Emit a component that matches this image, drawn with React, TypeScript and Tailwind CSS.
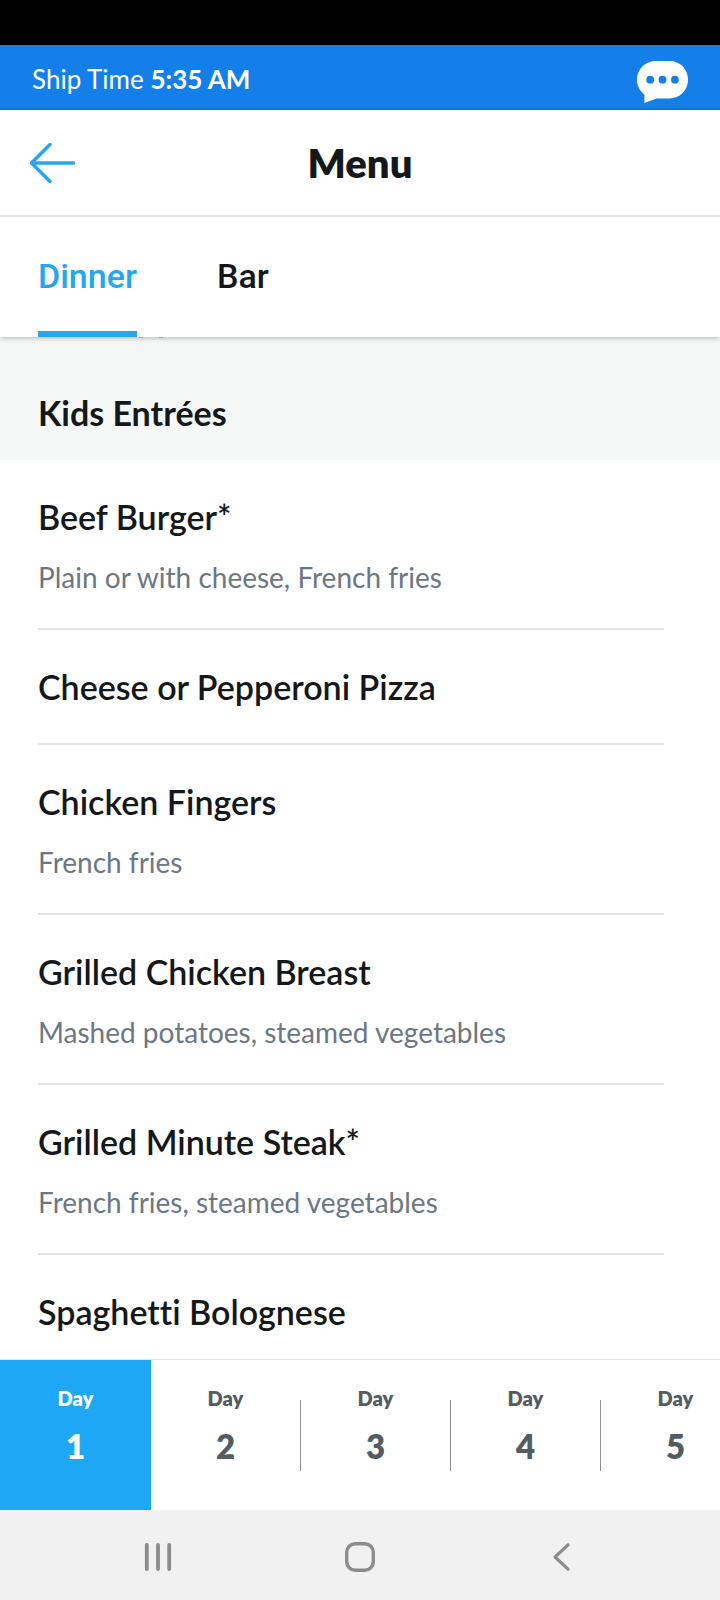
import { useState } from "react";

const tabs = ["Dinner", "Bar"];

const entrees = [
  { name: "Beef Burger*", description: "Plain or with cheese, French fries" },
  { name: "Cheese or Pepperoni Pizza" },
  { name: "Chicken Fingers", description: "French fries" },
  { name: "Grilled Chicken Breast", description: "Mashed potatoes, steamed vegetables" },
  { name: "Grilled Minute Steak*", description: "French fries, steamed vegetables" },
  { name: "Spaghetti Bolognese" },
];

const days = [1, 2, 3, 4, 5];

const ShipTimeBar = () => (
  <div className="flex h-[65px] shrink-0 items-end justify-between bg-[#147fe8] px-8 pb-[7px] text-white shadow-[inset_0_-3px_2px_-2px_rgba(0,0,0,0.2)]">
    <p className="pb-2 text-[26px] leading-8">
      Ship Time <span className="font-bold">5:35 AM</span>
    </p>
    <button type="button" aria-label="Messages">
      <svg className="block h-[42px] w-[51px]" viewBox="0 0 51 42" fill="none">
        <path
          d="M19 0H32.5C43 0 51 8 51 18.7S43 37.4 32.5 37.4H19.5L7.4 42V33.5C2.8 30 0 24.8 0 18.7C0 8 8.5 0 19 0Z"
          fill="#fff"
        />
        <circle cx="13.2" cy="18.7" r="3.9" fill="#147fe8" />
        <circle cx="25.5" cy="18.7" r="3.9" fill="#147fe8" />
        <circle cx="37.9" cy="18.7" r="3.9" fill="#147fe8" />
      </svg>
    </button>
  </div>
);

const Header = () => (
  <header className="grid h-[107px] shrink-0 grid-cols-[1fr_auto_1fr] items-center border-b-2 border-[#e4e4e4] px-[30px]">
    <button type="button" aria-label="Back" className="justify-self-start">
      <svg className="block h-10 w-[45px]" viewBox="0 0 45 40" fill="none">
        <path
          d="M20 1.5L1.5 20L20 38.5M2 20H43.5"
          stroke="#26a6ee"
          strokeWidth="3.5"
          strokeLinecap="round"
          strokeLinejoin="round"
        />
      </svg>
    </button>
    <h1 className="text-[40px] font-extrabold leading-[48px]">Menu</h1>
  </header>
);

const SystemNav = () => (
  <nav aria-label="System" className="flex h-[90px] shrink-0 justify-center bg-[#f1f1f1] pt-1 text-[#8c8c8c]">
    <button type="button" aria-label="Recent apps" className="flex w-[28%] items-center justify-center">
      <svg className="h-8 w-8" viewBox="0 0 32 32" fill="none" stroke="currentColor" strokeWidth="3.8" strokeLinecap="round">
        <path d="M4.8 4v24M16 4v24M27.2 4v24" />
      </svg>
    </button>
    <button type="button" aria-label="Home" className="flex w-[28%] items-center justify-center">
      <svg className="h-8 w-8" viewBox="0 0 32 32" fill="none" stroke="currentColor" strokeWidth="3.4">
        <rect x="2.7" y="2.7" width="26.6" height="26.6" rx="8.5" />
      </svg>
    </button>
    <button type="button" aria-label="Back" className="flex w-[28%] items-center justify-center">
      <svg className="h-8 w-8" viewBox="0 0 32 32" fill="none" stroke="currentColor" strokeWidth="3.2" strokeLinecap="round" strokeLinejoin="round">
        <path d="M22 3.8L9 16L22 28.2" />
      </svg>
    </button>
  </nav>
);

export default function App() {
  const [activeTab, setActiveTab] = useState("Dinner");
  const [activeDay, setActiveDay] = useState(1);

  return (
    <div className="flex h-screen flex-col overflow-hidden bg-white font-['Lato',sans-serif] text-[#15181a] [font-variant-ligatures:none]">
      <div className="h-[45px] shrink-0 bg-black" />
      <ShipTimeBar />
      <Header />

      <nav
        aria-label="Menus"
        className="relative z-10 flex h-[120px] shrink-0 gap-20 bg-white px-[38px] shadow-[0_3px_4px_-1px_rgba(0,0,0,0.2)]"
      >
        {tabs.map((tab) => (
          <button
            key={tab}
            type="button"
            onClick={() => setActiveTab(tab)}
            className={`border-b-6 pt-1 font-['Roboto',sans-serif] text-[34px] font-medium leading-10 ${
              tab === activeTab ? "border-[#26a6ee] text-[#26a6ee]" : "border-transparent"
            }`}
          >
            {tab}
          </button>
        ))}
        {/* descenders of the row scrolled under the tabs */}
        <span aria-hidden="true" className="absolute left-[139px] top-full flex h-px gap-4">
          <span className="w-1 bg-[#a3a6a7]" />
          <span className="w-1 bg-[#a3a6a7]" />
        </span>
      </nav>

      <main className="min-h-0 flex-1 overflow-y-auto [scrollbar-width:none]">
        <h2 className="bg-[#f5f7f7] px-[38px] pb-[27px] pt-14 text-[34px] font-bold leading-10">
          Kids Entrées
        </h2>
        <ul className="pl-[38px] pr-14">
          {entrees.map((entree) => (
            <li key={entree.name} className="border-b-2 border-[#e4e4e4] pb-9 pt-[37px]">
              <h3 className="text-[34px] font-semibold leading-10">{entree.name}</h3>
              {entree.description && (
                <p className="mt-[25px] text-[28px] leading-[30px] text-[#6c7783]">{entree.description}</p>
              )}
            </li>
          ))}
        </ul>
      </main>

      <div className="flex h-[151px] shrink-0 overflow-x-auto border-t border-[#e4e4e4] [scrollbar-width:none]">
        {days.map((day) => (
          <button
            key={day}
            type="button"
            onClick={() => setActiveDay(day)}
            className={`flex shrink-0 items-center ${
              day === activeDay ? "w-[151px] bg-[#1ea7f4] text-white" : "w-[150px] text-[#535c60]"
            }`}
          >
            <span className="flex-1 pb-[18px] font-extrabold">
              <span className="block text-xl leading-6">Day</span>
              <span className="mt-4 block text-[33px] leading-10">{day}</span>
            </span>
            {day !== activeDay && <span className="h-[71px] w-px bg-[#8b9093]" />}
          </button>
        ))}
      </div>

      <SystemNav />
    </div>
  );
}
